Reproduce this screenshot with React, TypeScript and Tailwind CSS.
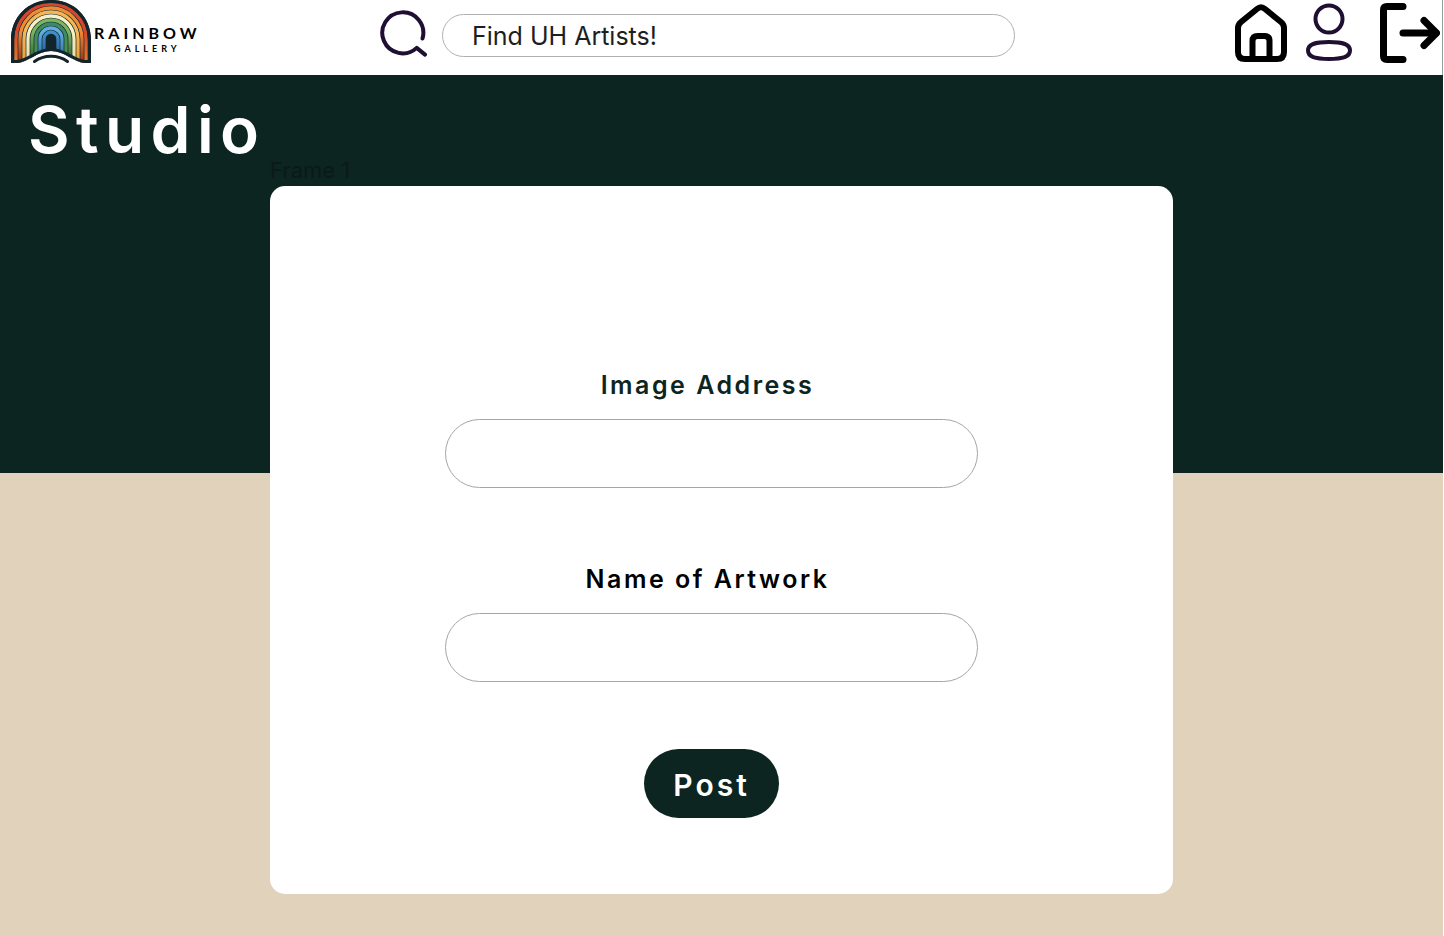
import React from "react";

const ARCHES = [
  { radius: 35, color: "#d5472c", side: "#e0772a" },
  { radius: 31, color: "#ee8b35", side: "#9c3a20" },
  { radius: 27, color: "#f3b75a", side: "#efa03a" },
  { radius: 23, color: "#f6efc4", side: "#e6dfa6" },
  { radius: 19, color: "#7db463", side: "#2c6534" },
  { radius: 15, color: "#3f8a63", side: "#4c9448" },
  { radius: 11, color: "#62aede", side: "#2a6da6" },
  { radius: 7, color: "#3f8fce", side: "#24598c" },
];

const MARK_OUTLINE =
  "M0 63V40C0 17 17 0 40 0s40 17 40 40v23H74C62 62 54 51 40 51S18 62 6 63Z";

function RainbowMark() {
  return (
    <svg viewBox="0 0 80 64" className="h-16 w-20 shrink-0" fill="none" aria-hidden="true">
      <defs>
        <clipPath id="mark-shape">
          <path d={MARK_OUTLINE} />
        </clipPath>
        {ARCHES.map((arch) => (
          <linearGradient
            key={arch.radius}
            id={`arch-${arch.radius}`}
            gradientUnits="userSpaceOnUse"
            x1="0"
            y1="4"
            x2="0"
            y2="60"
          >
            <stop offset="0.5" stopColor={arch.color} />
            <stop offset="1" stopColor={arch.side} />
          </linearGradient>
        ))}
      </defs>
      <g clipPath="url(#mark-shape)">
        <rect width="80" height="64" fill="#12252b" />
        {ARCHES.map(({ radius }) => (
          <path
            key={radius}
            d={`M${40 - radius} 64V39A${radius} ${radius} 0 0 1 ${40 + radius} 39V64`}
            stroke={`url(#arch-${radius})`}
            strokeWidth="3.3"
          />
        ))}
        <path d={MARK_OUTLINE} stroke="#12252b" strokeWidth="6" />
      </g>
      <path d="M23.500 61.500C33 54.500 47 54.500 56.500 61.500" stroke="#12252b" strokeWidth="3" strokeLinecap="round" />
    </svg>
  );
}

function SearchIcon() {
  return (
    <svg viewBox="0 0 48 48" className="size-12 shrink-0" fill="none" stroke="#1e0f33" strokeWidth="4" strokeLinecap="round" strokeLinejoin="round" aria-hidden="true">
      <path d="M42.500 28.500A20.500 20.500 0 1 0 36.700 37.900L45 44.600" />
    </svg>
  );
}

function HomeIcon() {
  return (
    <svg viewBox="0 0 52 58" className="h-[58px] w-[52px]" fill="none" stroke="#000" strokeWidth="6" strokeLinejoin="round" aria-hidden="true">
      <path d="M3 24Q3 20.500 6 18L22 5Q26 1.500 30 5L46 18Q49 20.500 49 24V48Q49 55 42 55H10Q3 55 3 48Z" />
      <path d="M17.500 55V37Q17.500 32 22.500 32H29.500Q34.500 32 34.500 37V55" />
    </svg>
  );
}

function ProfileIcon() {
  return (
    <svg viewBox="0 0 46 58" className="h-[58px] w-[46px]" fill="none" stroke="#1e0f33" strokeWidth="4" aria-hidden="true">
      <circle cx="23" cy="16" r="13.500" />
      <path d="M2 47.500C2 41 9 39 23 39S44 41 44 47.500S37 56 23 56S2 54 2 47.500Z" />
    </svg>
  );
}

function LogoutIcon() {
  return (
    <svg viewBox="0 0 60 60" className="size-15" fill="none" stroke="#000" strokeWidth="7" strokeLinecap="round" strokeLinejoin="round" aria-hidden="true">
      <path d="M23 3.500H7Q3.500 3.500 3.500 7V53Q3.500 56.500 7 56.500H23" />
      <path d="M23 30H56" />
      <path d="M44 17.500L56.500 30L44 42.500" />
    </svg>
  );
}

function Header() {
  return (
    <header className="flex h-[75px] items-start border-r border-[#8fa39e] bg-white">
      <div className="w-[380px] shrink pl-[11px]">
        <a href="#" aria-label="Rainbow Gallery" className="inline-flex items-center gap-[3px] text-black">
          <RainbowMark />
          <span className="flex flex-col items-center gap-0.5 pt-4 font-['Lato',sans-serif] font-bold">
            <span className="text-base leading-4 tracking-[4px]">RAINBOW</span>
            <span className="text-[9px] leading-3 tracking-[4px]">GALLERY</span>
          </span>
        </a>
      </div>
      <form role="search" className="flex max-w-[635px] flex-1 items-start gap-[14px] pt-[10px]" onSubmit={(e) => e.preventDefault()}>
        <button type="submit" aria-label="Search">
          <SearchIcon />
        </button>
        <input
          type="search"
          aria-label="Find UH Artists"
          placeholder="Find UH Artists!"
          className="mt-1 h-[43px] min-w-0 flex-1 rounded-full border border-[#b0b0b0] bg-white px-[29px] text-[25px] text-[#1e1e1e] outline-none placeholder:text-[#1e1e1e]"
        />
      </form>
      <nav aria-label="Account" className="ml-auto flex items-start pt-[3px] pr-0.5">
        <a href="#" aria-label="Home" className="mr-[19px] pt-px">
          <HomeIcon />
        </a>
        <a href="#" aria-label="Profile" className="mr-7">
          <ProfileIcon />
        </a>
        <a href="#" aria-label="Log out">
          <LogoutIcon />
        </a>
      </nav>
    </header>
  );
}

type FieldProps = { id: string; label: string; tone: string };

function Field({ id, label, tone }: FieldProps) {
  return (
    <div className="flex w-full max-w-[533px] flex-col items-center gap-[18px]">
      <label htmlFor={id} className={`pr-2 text-[25px] leading-8 font-semibold tracking-widest ${tone}`}>
        {label}
      </label>
      <input id={id} type="text" className="h-[69px] w-full rounded-full border border-[#a6a6a6] bg-white px-8 text-2xl outline-none" />
    </div>
  );
}

export default function App() {
  return (
    <div className="flex min-h-screen flex-col bg-white pr-px font-['Inter',sans-serif]">
      <Header />
      <main className="flex-1 bg-[#e1d2bb] bg-[linear-gradient(#0d2520,#0d2520)] bg-[length:100%_398px] bg-no-repeat pb-[42px]">
        <h1 className="pt-[19px] pl-7 text-[64px] leading-[72px] font-semibold tracking-widest text-white">Studio</h1>
        <section aria-labelledby="frame-title" className="mx-auto -mt-2 w-full max-w-[903px]">
          <h2 id="frame-title" className="h-7 text-[22px] leading-6 text-[#091a17]">
            Frame 1
          </h2>
          <form
            className="flex flex-col items-center rounded-[15px] bg-white pt-[183px] pr-11 pb-[76px] pl-6"
            onSubmit={(e) => e.preventDefault()}
          >
            <div className="flex w-full flex-col items-center gap-[75px]">
              <Field id="image-address" label="Image Address" tone="text-[#0d2520]" />
              <Field id="artwork-name" label="Name of Artwork" tone="text-black" />
            </div>
            <button type="submit" className="mt-[67px] h-[69px] w-[135px] rounded-full bg-[#0d2520] pt-1 text-[30px] font-semibold tracking-widest text-white">
              Post
            </button>
          </form>
        </section>
      </main>
    </div>
  );
}
